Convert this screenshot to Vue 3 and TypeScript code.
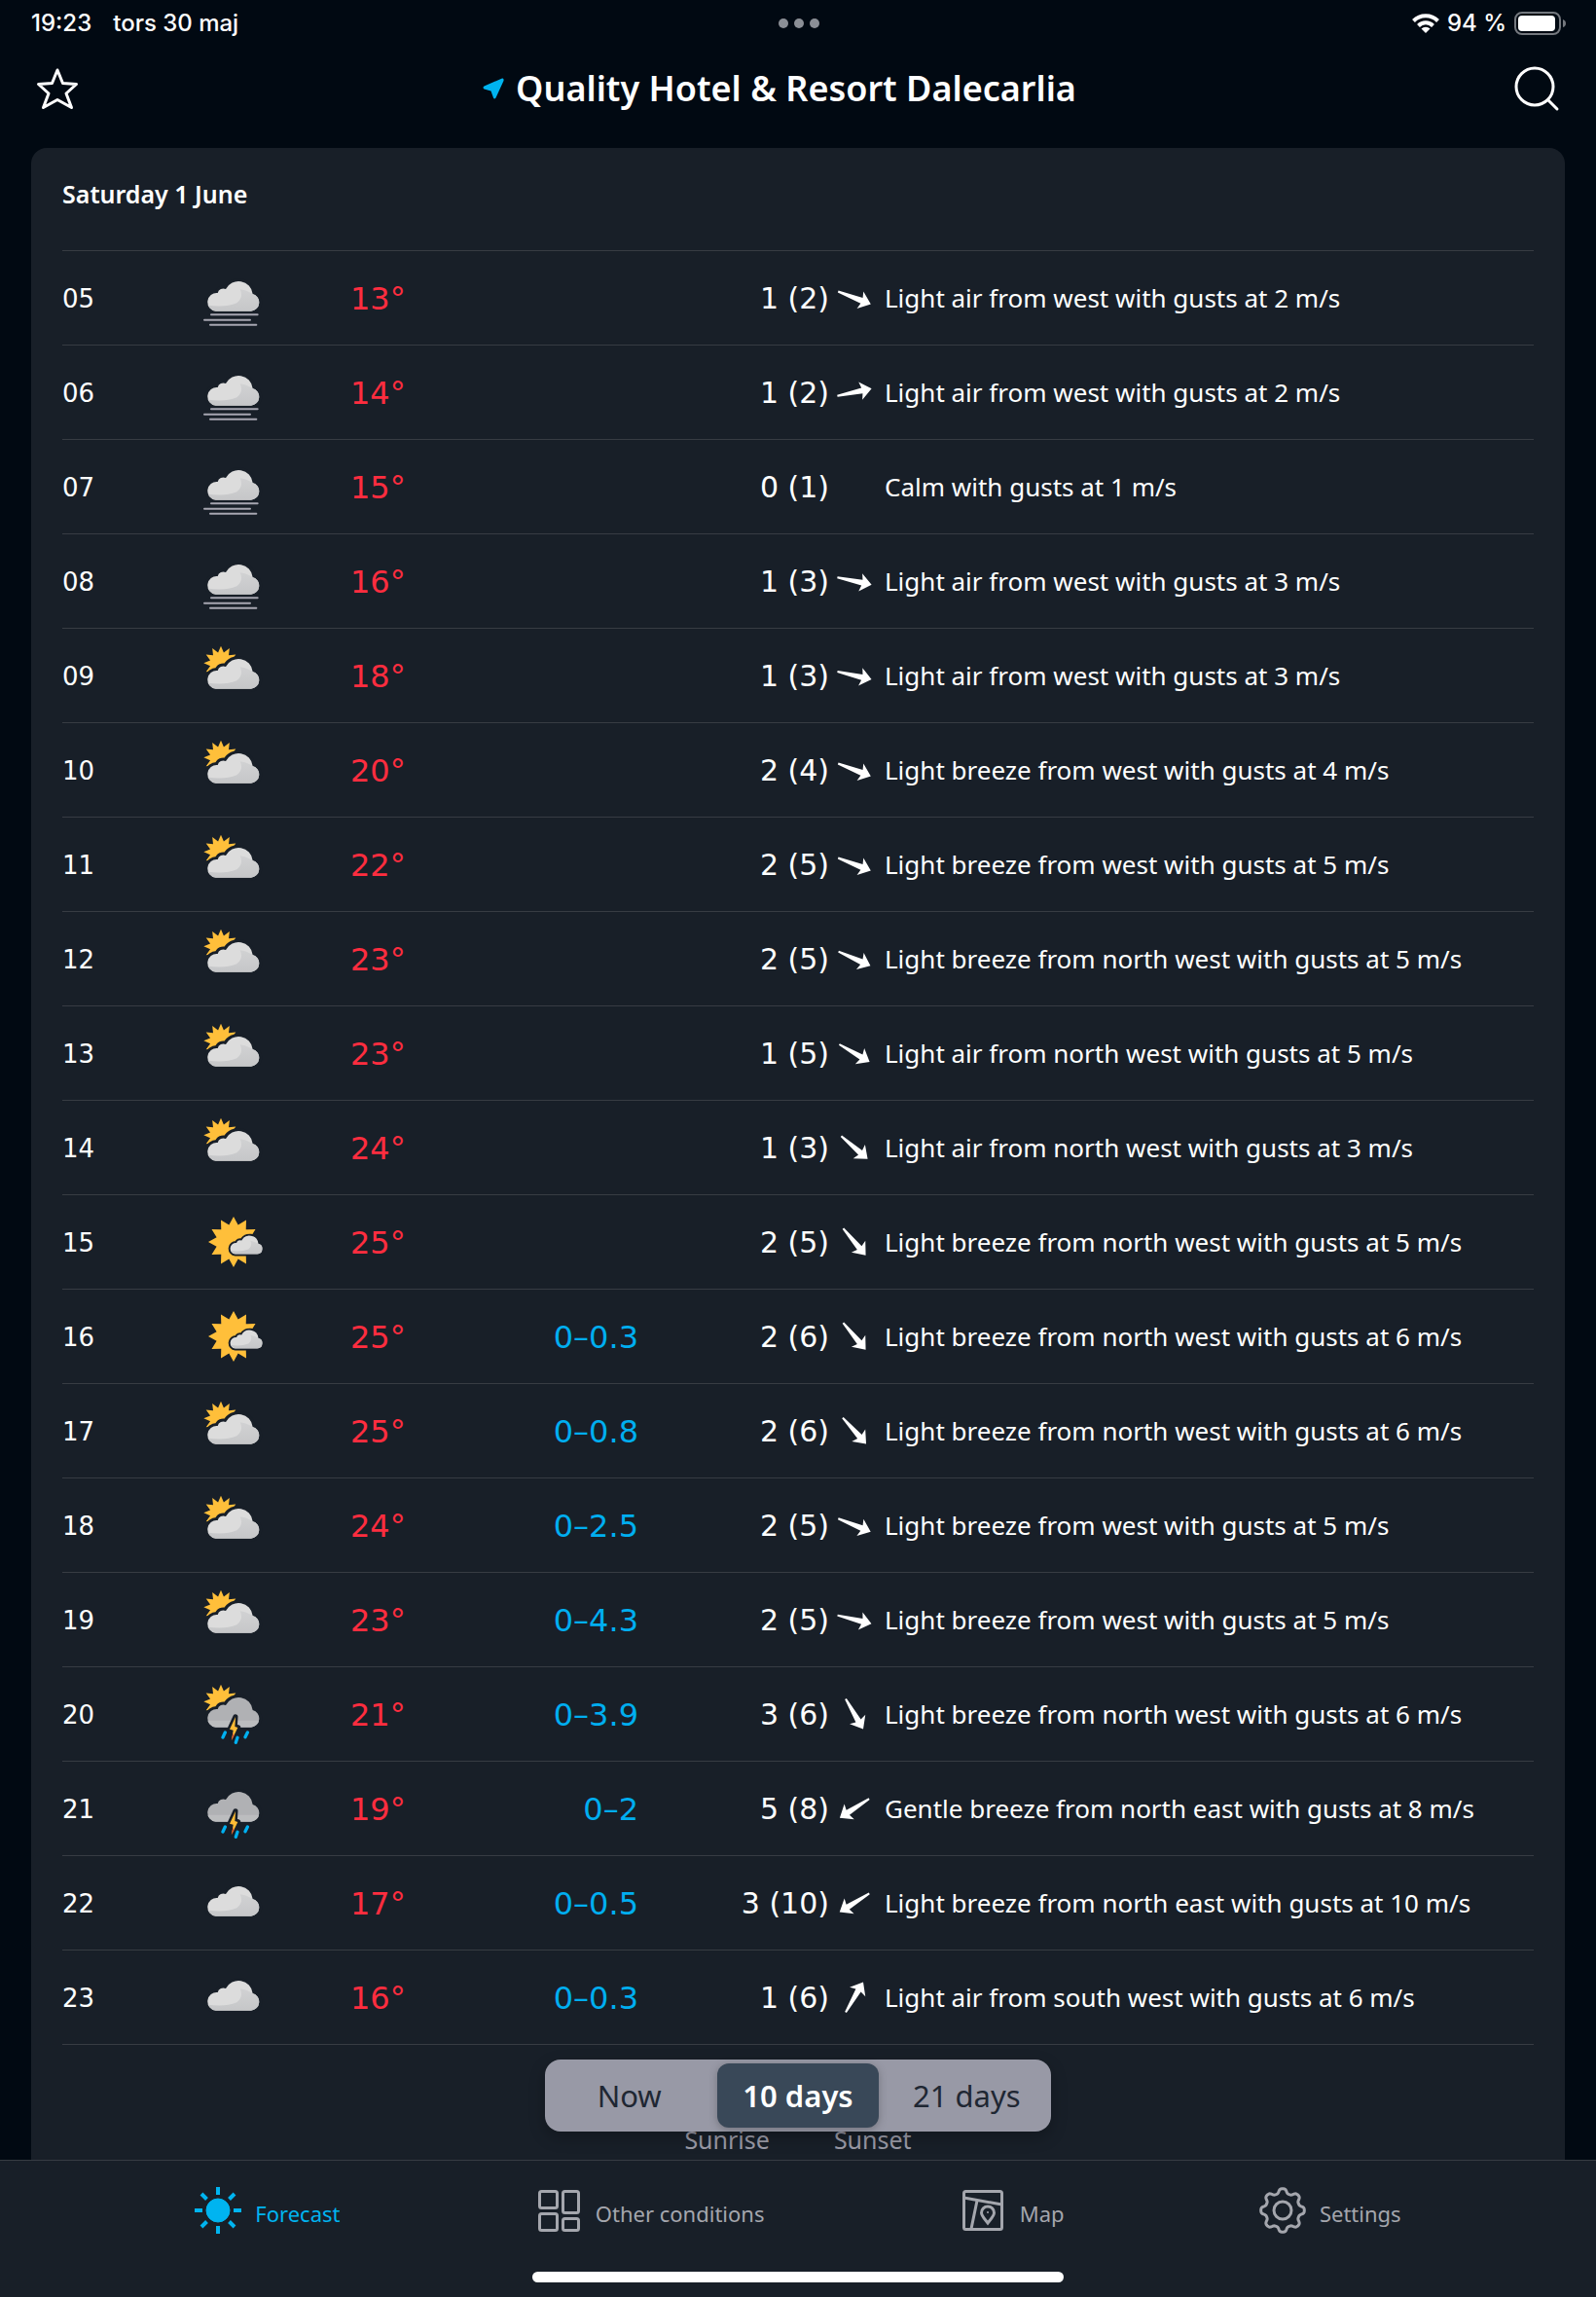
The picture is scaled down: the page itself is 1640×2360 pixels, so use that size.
<script setup lang="ts">
import { ref } from 'vue'

type Sky = 'fog' | 'mostlyCloudy' | 'mostlySunny' | 'thunderSun' | 'thunder' | 'cloudy'

interface Hour {
  time: string
  sky: Sky
  temp: number
  rain?: string
  wind: string
  angle?: number
  text: string
}

const hours: Hour[] = [
  { time: '05', sky: 'fog', temp: 13, wind: '1 (2)', angle: 21, text: 'Light air from west with gusts at 2 m/s' },
  { time: '06', sky: 'fog', temp: 14, wind: '1 (2)', angle: -12, text: 'Light air from west with gusts at 2 m/s' },
  { time: '07', sky: 'fog', temp: 15, wind: '0 (1)', text: 'Calm with gusts at 1 m/s' },
  { time: '08', sky: 'fog', temp: 16, wind: '1 (3)', angle: 12, text: 'Light air from west with gusts at 3 m/s' },
  { time: '09', sky: 'mostlyCloudy', temp: 18, wind: '1 (3)', angle: 13, text: 'Light air from west with gusts at 3 m/s' },
  { time: '10', sky: 'mostlyCloudy', temp: 20, wind: '2 (4)', angle: 21, text: 'Light breeze from west with gusts at 4 m/s' },
  { time: '11', sky: 'mostlyCloudy', temp: 22, wind: '2 (5)', angle: 21, text: 'Light breeze from west with gusts at 5 m/s' },
  { time: '12', sky: 'mostlyCloudy', temp: 23, wind: '2 (5)', angle: 24, text: 'Light breeze from north west with gusts at 5 m/s' },
  { time: '13', sky: 'mostlyCloudy', temp: 23, wind: '1 (5)', angle: 30, text: 'Light air from north west with gusts at 5 m/s' },
  { time: '14', sky: 'mostlyCloudy', temp: 24, wind: '1 (3)', angle: 41, text: 'Light air from north west with gusts at 3 m/s' },
  { time: '15', sky: 'mostlySunny', temp: 25, wind: '2 (5)', angle: 50, text: 'Light breeze from north west with gusts at 5 m/s' },
  { time: '16', sky: 'mostlySunny', temp: 25, rain: '0–0.3', wind: '2 (6)', angle: 50, text: 'Light breeze from north west with gusts at 6 m/s' },
  { time: '17', sky: 'mostlyCloudy', temp: 25, rain: '0–0.8', wind: '2 (6)', angle: 48, text: 'Light breeze from north west with gusts at 6 m/s' },
  { time: '18', sky: 'mostlyCloudy', temp: 24, rain: '0–2.5', wind: '2 (5)', angle: 22, text: 'Light breeze from west with gusts at 5 m/s' },
  { time: '19', sky: 'mostlyCloudy', temp: 23, rain: '0–4.3', wind: '2 (5)', angle: 14, text: 'Light breeze from west with gusts at 5 m/s' },
  { time: '20', sky: 'thunderSun', temp: 21, rain: '0–3.9', wind: '3 (6)', angle: 60, text: 'Light breeze from north west with gusts at 6 m/s' },
  { time: '21', sky: 'thunder', temp: 19, rain: '0–2', wind: '5 (8)', angle: 147, text: 'Gentle breeze from north east with gusts at 8 m/s' },
  { time: '22', sky: 'cloudy', temp: 17, rain: '0–0.5', wind: '3 (10)', angle: 148, text: 'Light breeze from north east with gusts at 10 m/s' },
  { time: '23', sky: 'cloudy', temp: 16, rain: '0–0.3', wind: '1 (6)', angle: -60, text: 'Light air from south west with gusts at 6 m/s' },
]

const ranges = ['Now', '10 days', '21 days']
const range = ref('10 days')
const tab = ref('Forecast')

// Twelve-pointed sun as an SVG point list
function star(cx: number, cy: number, outer: number, inner: number): string {
  return Array.from({ length: 24 }, (_, i) => {
    const r = i % 2 ? inner : outer
    const a = (i * Math.PI) / 12
    return `${(cx + r * Math.sin(a)).toFixed(1)},${(cy - r * Math.cos(a)).toFixed(1)}`
  }).join(' ')
}
const smallSun = star(141, 124, 53, 34)
const bigSun = star(180, 162, 78, 54)

// Cog outline with eight rounded teeth
const cog = Array.from({ length: 160 }, (_, i) => {
  const a = (i * Math.PI) / 80
  const wave = Math.cos(8 * a)
  const r = 20 + 2.5 * Math.tanh(wave * 1.6)
  return `${(24 + r * Math.sin(a)).toFixed(2)},${(24 - r * Math.cos(a)).toFixed(2)}`
}).join(' ')
</script>

<template>
  <div class="screen">
    <svg class="defs" aria-hidden="true">
      <defs>
        <path id="cloud" d="M125 203 A28 28 0 0 1 131 147 A18 18 0 0 1 156 135 A44 44 0 0 1 239 150 A27 27 0 0 1 234 203Z" />
        <clipPath id="cloud-clip"><use href="#cloud" /></clipPath>
        <linearGradient id="shade" x1="0" y1="0" x2="0" y2="1">
          <stop offset="0" stop-color="#c9cacc" stop-opacity="0.6" />
          <stop offset="1" stop-color="#c4c5c7" />
        </linearGradient>
        <g id="light-cloud">
          <use href="#cloud" fill="#dcdcdc" />
          <path clip-path="url(#cloud-clip)" fill="url(#shade)" d="M200 136 Q224 140 239 150 L270 150 V210 H97 V184 Q150 194 190 178 Q212 160 200 136Z" />
        </g>
        <g id="storm">
          <use href="#cloud" fill="#b0b1b4" />
          <path clip-path="url(#cloud-clip)" fill="#bcbdbf" d="M90 182 H270 V210 H90Z" />
          <path d="M186 170 L168 209 L179 212 L173 243 L194 203 L184 201Z" fill="#181f28" stroke="#181f28" stroke-width="15" stroke-linejoin="round" />
          <path d="M186 171 L168 209 L179 212 L174 243 L193 204 L184 201Z" fill="#ffbc35" />
          <path d="M179 220 L173 243 L181 230" fill="#e8502c" />
          <path d="M154 219 L147 234 M192 235 L187 250 M223 219 L216 233" stroke="#00b0f0" stroke-width="10" stroke-linecap="round" />
        </g>
      </defs>
    </svg>

    <header>
      <div class="status">
        <div class="status-left"><span>19:23</span><span>tors 30 maj</span></div>
        <div class="dots"><i></i><i></i><i></i></div>
        <div class="status-right">
          <svg width="28" height="20" viewBox="0 0 28 20" fill="none" stroke="#fff" stroke-width="4">
            <path d="M1.500 7.500 A17.500 17.500 0 0 1 26.500 7.500" />
            <path d="M6.500 12.500 A10.500 10.500 0 0 1 21.500 12.500" />
            <path d="M14 20 L9.500 15.500 A6.500 6.500 0 0 1 18.500 15.500Z" fill="#fff" stroke="none" />
          </svg>
          <span>94 %</span>
          <svg width="54" height="24" viewBox="0 0 54 24">
            <rect x="1" y="1" width="46" height="22" rx="7" fill="none" stroke="#74787e" stroke-width="2" />
            <rect x="4" y="4" width="38" height="16" rx="4" fill="#fff" />
            <path d="M50 8 Q53 9 53 12 Q53 15 50 16Z" fill="#74787e" />
          </svg>
        </div>
      </div>
      <div class="title-bar">
        <button class="icon-button" type="button" aria-label="Favourite">
          <svg width="44" height="44" viewBox="0 0 44 44" fill="none" stroke="#fff" stroke-width="3" stroke-linejoin="round">
            <path d="M22 3 L27.500 16.500 L41.500 17.500 L31 27 L36.500 41.500 L22 33.500 L7.500 41.500 L13 27 L2.500 17.500 L16.500 16.500Z" />
          </svg>
        </button>
        <h1>
          <svg width="22" height="22" viewBox="0 0 22 22" fill="#00b4f0"><path d="M20 0.500 Q22 0 21.500 3 L13.500 20.500 Q12 22.500 11 20.500 L8.500 13.500 L1.500 11.500 Q-0.500 10 1.500 8.500Z" /></svg>
          <span>Quality Hotel &amp; Resort Dalecarlia</span>
        </h1>
        <button class="icon-button" type="button" aria-label="Search">
          <svg width="48" height="48" viewBox="0 0 48 48" fill="none" stroke="#fff" stroke-width="3" stroke-linecap="round">
            <circle cx="22" cy="22" r="19" /><path d="M36 36 L45 45" />
          </svg>
        </button>
      </div>
    </header>

    <main>
      <section class="card">
        <h2>Saturday 1 June</h2>
        <table>
          <colgroup>
            <col class="c-time" /><col class="c-sky" /><col class="c-temp" /><col class="c-rain" /><col class="c-wind" /><col class="c-arrow" /><col />
          </colgroup>
          <tbody>
            <tr v-for="h in hours" :key="h.time">
              <th scope="row" class="time">{{ h.time }}</th>
              <td class="sky">
                <svg width="72" height="72" viewBox="66 54 216 216">
                  <template v-if="h.sky === 'mostlySunny'">
                    <polygon :points="bigSun" fill="#ffbf3a" />
                    <g transform="translate(168 142) scale(0.622) translate(-97 -110)">
                      <use href="#cloud" fill="#181f28" stroke="#181f28" stroke-width="18" />
                      <use href="#light-cloud" />
                    </g>
                  </template>
                  <template v-else>
                    <polygon v-if="h.sky === 'mostlyCloudy' || h.sky === 'thunderSun'" :points="smallSun" fill="#ffbf3a" />
                    <use href="#cloud" fill="#181f28" stroke="#181f28" stroke-width="18" />
                    <use :href="h.sky === 'thunder' || h.sky === 'thunderSun' ? '#storm' : '#light-cloud'" />
                    <path v-if="h.sky === 'fog'" d="M111 214 H254 M90 230 H231 M108 245 H250" stroke="#a6a6b1" stroke-width="6" stroke-linecap="round" />
                  </template>
                </svg>
              </td>
              <td class="temp">{{ h.temp }}°</td>
              <td class="rain">{{ h.rain }}</td>
              <td class="wind">{{ h.wind }}</td>
              <td class="arrow">
                <svg v-if="h.angle !== undefined" width="40" height="40" viewBox="-60 -60 120 120">
                  <path :transform="`rotate(${h.angle})`" fill="#fff" d="M-54 -3 L24 -9 L19 -28 L54 0 L19 28 L24 9 L-54 3Z" />
                </svg>
              </td>
              <td class="text">{{ h.text }}</td>
            </tr>
          </tbody>
        </table>
        <div class="sun-times"><span>Sunrise</span><span>Sunset</span></div>
      </section>
      <div class="segments" role="group" aria-label="Forecast range">
        <button v-for="r in ranges" :key="r" type="button" :class="{ active: r === range }" :aria-pressed="r === range" @click="range = r">{{ r }}</button>
      </div>
    </main>

    <nav>
      <div class="tabs">
        <a href="#forecast" :class="{ active: tab === 'Forecast' }" @click.prevent="tab = 'Forecast'">
          <svg width="48" height="48" viewBox="0 0 48 48" stroke="currentColor" stroke-width="4">
            <circle cx="24" cy="24" r="12" fill="currentColor" stroke-width="1" />
            <path d="M24 0V8 M24 40V48 M0 24H8 M40 24H48 M7 7L12.500 12.500 M35.500 35.500L41 41 M7 41L12.500 35.500 M35.500 12.500L41 7" />
          </svg>
          <span>Forecast</span>
        </a>
        <a href="#conditions" :class="{ active: tab === 'Conditions' }" @click.prevent="tab = 'Conditions'">
          <svg width="48" height="48" viewBox="0 0 48 48" fill="none" stroke="currentColor" stroke-width="3">
            <rect x="4.500" y="4.500" width="18" height="17" rx="2" /><rect x="28.500" y="4.500" width="16" height="22" rx="2" />
            <rect x="4.500" y="27.500" width="18" height="17" rx="2" /><rect x="28.500" y="32.500" width="16" height="12" rx="2" />
          </svg>
          <span>Other conditions</span>
        </a>
        <a href="#map" :class="{ active: tab === 'Map' }" @click.prevent="tab = 'Map'">
          <svg width="48" height="48" viewBox="0 0 48 48" fill="none" stroke="currentColor" stroke-width="3">
            <rect x="4.500" y="4.500" width="39" height="39" rx="2" />
            <path d="M4.500 11 L43.500 18 M18 14 L12 43" />
            <path d="M29 37 C25 32 22.500 29.500 22.500 26.500 A6.500 6.500 0 0 1 35.500 26.500 C35.500 29.500 33 32 29 37Z" />
            <circle cx="29" cy="26" r="1" fill="currentColor" stroke="none" />
          </svg>
          <span>Map</span>
        </a>
        <a href="#settings" :class="{ active: tab === 'Settings' }" @click.prevent="tab = 'Settings'">
          <svg width="48" height="48" viewBox="0 0 48 48" fill="none" stroke="currentColor" stroke-width="3">
            <polygon :points="cog" stroke-linejoin="round" /><circle cx="24" cy="24" r="9" />
          </svg>
          <span>Settings</span>
        </a>
      </div>
      <div class="home"></div>
    </nav>
  </div>
</template>

<style>
body { margin: 0; background: #010912; }
</style>

<style scoped>
.screen {
  height: 100vh;
  display: flex;
  flex-direction: column;
  overflow: hidden;
  background: #010912;
  color: #fff;
  font-family: "Noto Sans", "Open Sans", sans-serif;
}
.defs { position: absolute; width: 0; height: 0; }
svg { display: block; flex: none; }
button { margin: 0; padding: 0; border: 0; background: none; color: inherit; font: inherit; cursor: pointer; }

.status {
  display: grid;
  grid-template-columns: 1fr auto 1fr;
  align-items: center;
  height: 48px;
  padding: 0 30px 0 32px;
  font: 500 24px/28px Inter, sans-serif;
}
.status-left { display: flex; gap: 22px; }
.dots { display: flex; gap: 6px; }
.dots i { width: 10px; height: 10px; border-radius: 50%; background: #8b8f96; }
.status-right { display: flex; justify-content: flex-end; align-items: center; gap: 8px; }

.title-bar {
  display: flex;
  align-items: center;
  justify-content: space-between;
  height: 86px;
  padding: 0 37px;
}
h1 { display: flex; align-items: center; gap: 12px; margin: 0; padding-right: 34px; font-size: 36px; line-height: 48px; font-weight: 600; }

main { position: relative; flex: 1; min-height: 0; overflow: hidden; padding: 18px 32px 0; }
.card { min-height: 100%; box-sizing: border-box; padding: 0 32px; border-radius: 16px 16px 0 0; background: #181f28; }
h2 { margin: 0; padding: 31px 0 42px; border-bottom: 1px solid #373c43; font-size: 25px; line-height: 32px; font-weight: 600; }

table { width: 100%; border-collapse: separate; border-spacing: 0; table-layout: fixed; }
.c-time { width: 138px; }
.c-sky { width: 158px; }
.c-temp { width: 120px; }
.c-rain { width: 176px; }
.c-wind { width: 196px; }
.c-arrow { width: 57px; }
th, td { box-sizing: border-box; height: 97px; padding: 0; border-bottom: 1px solid #373c43; text-align: left; vertical-align: middle; white-space: nowrap; line-height: 40px; }
.time, .temp, .rain, .wind { padding-top: 2px; font-family: "DejaVu Sans", sans-serif; font-weight: 400; }
.time { font-size: 26px; }
.temp, .rain { font-size: 32px; }
.temp { color: #ff2d3f; }
.rain { color: #00aef0; text-align: right; }
.wind { font-size: 30px; text-align: right; }
.arrow svg { margin-left: 6px; }
.text { font-size: 26px; }

.sun-times { display: flex; justify-content: center; gap: 66px; padding-top: 79px; color: #9a9aa6; font-size: 25px; line-height: 36px; }

.segments {
  position: absolute;
  bottom: 29px;
  left: 50%;
  display: flex;
  width: 520px;
  height: 74px;
  transform: translateX(-50%);
  border-radius: 16px;
  background: #9899a6;
  box-shadow: 0 6px 16px rgba(0, 0, 0, 0.25);
}
.segments button { flex: 1; margin: 4px; border-radius: 12px; color: #1f2733; font-size: 31px; line-height: 40px; }
.segments .active { background: #394858; color: #fff; font-weight: 600; box-shadow: 0 2px 8px rgba(0, 0, 0, 0.25); }

nav { border-top: 1px solid #373c43; background: #181f28; }
.tabs { display: flex; justify-content: space-evenly; padding-top: 27px; }
.tabs a { display: flex; align-items: center; gap: 14px; color: #a4a6ad; font-size: 22px; line-height: 32px; text-decoration: none; }
.tabs a span { padding-top: 6px; }
.tabs .active { color: #00b4f0; }
.home { width: 33.3%; height: 11px; margin: 39px auto 15px; border-radius: 6px; background: #fff; }
</style>
